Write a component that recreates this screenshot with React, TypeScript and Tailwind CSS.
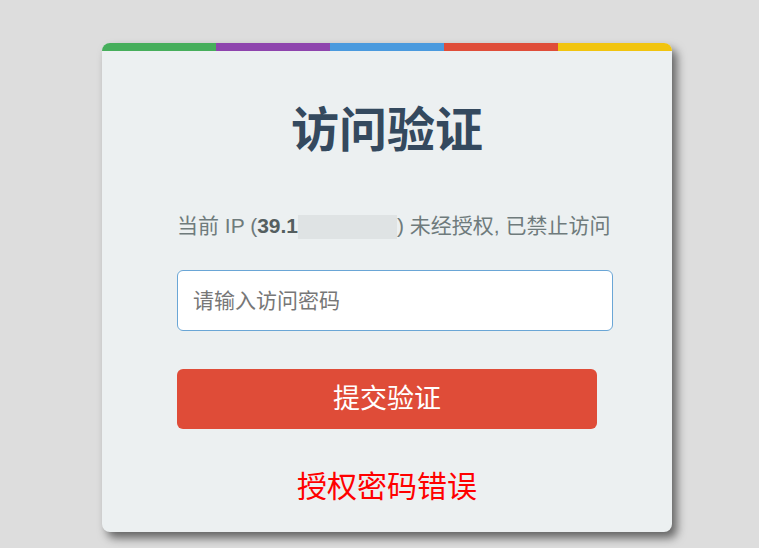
import { useState } from 'react'

const bars = ['bg-[#46ae5b]', 'bg-[#8e44ad]', 'bg-[#4a9ade]', 'bg-[#df4d39]', 'bg-[#f1c40f]']

export default function App() {
  const [pwd, setPwd] = useState('')

  return (
    <div className="min-h-[548px] bg-[#dddddd] pt-[43px] pl-[102px] font-['Liberation_Sans','Noto_Sans_CJK_SC',sans-serif]">
      <div className="w-[570px] rounded-lg overflow-hidden bg-[#ecf0f1] shadow-[5px_6px_10px_rgba(0,0,0,0.55)]">
        <div className="flex h-[8px]">
          {bars.map(b => <div key={b} className={`flex-1 ${b}`} />)}
        </div>
        <div className="px-[75px] pt-[51px] pb-[27px] flex flex-col">
          <h1 className="text-center text-[48px] leading-[58px] font-bold text-[#34495e]">访问验证</h1>
          <p className="mt-[53px] text-center text-[21px] leading-[26px] text-[#6f7b7c] whitespace-nowrap">
            当前 IP (<b className="text-[#555f60]">39.1</b>
            <span className="inline-block align-middle w-[99px] h-[24px] bg-[#dfe3e4]" />) 未经授权, 已禁止访问
          </p>
          <input
            autoFocus
            value={pwd}
            onChange={e => setPwd(e.target.value)}
            placeholder="请输入访问密码"
            className="mt-[31px] w-[436px] h-[61px] rounded-md border border-[#6aa6d6] bg-white px-[15px] text-[21px] text-[#333] placeholder:text-[#777] outline-none"
          />
          <button className="mt-[38px] h-[60px] w-full rounded-md bg-[#df4c38] text-white text-[27px]">提交验证</button>
          <p className="mt-[40px] text-center text-[30px] leading-[36px] text-[#ff0000]">授权密码错误</p>
        </div>
      </div>
    </div>
  )
}
